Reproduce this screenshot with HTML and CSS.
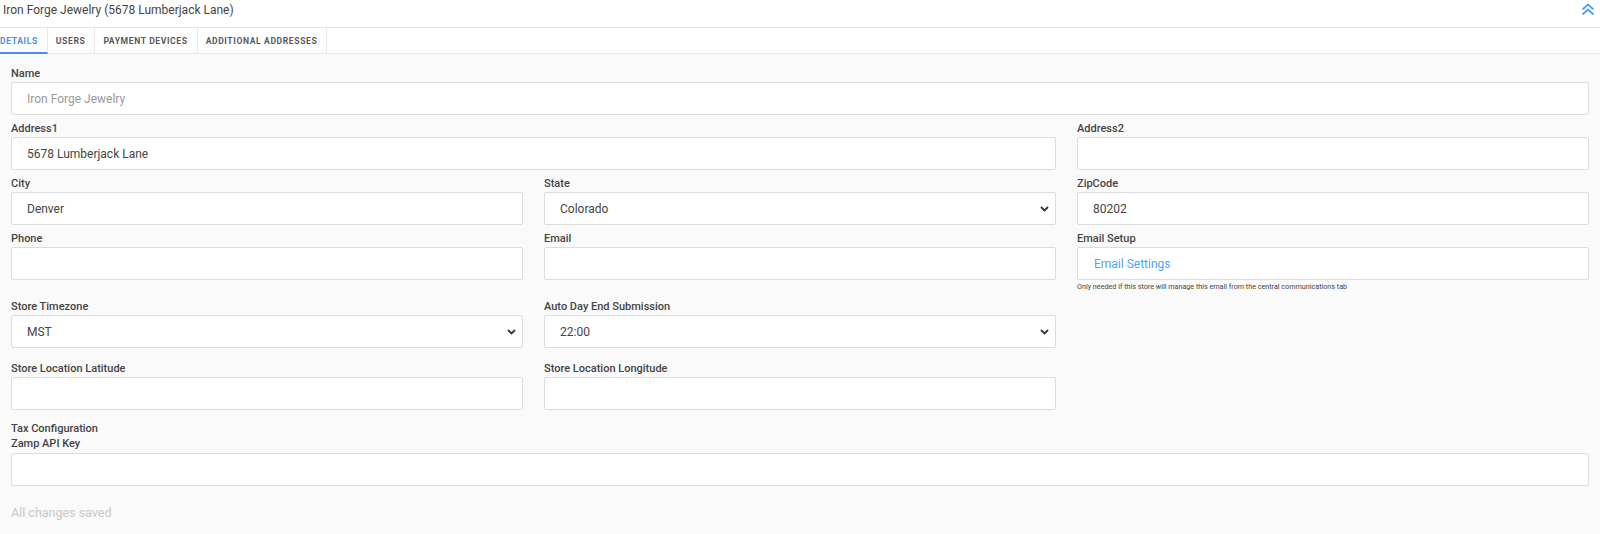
FILE: index.html
```html
<!DOCTYPE html>
<html>
<head>
<meta charset="utf-8">
<link rel="stylesheet" href="styles.css">
</head>
<body>
<div class="header">
  <div class="title">Iron Forge Jewelry (5678 Lumberjack Lane)</div>
  <svg class="collapse" width="14" height="13" viewBox="0 0 14 13"><path d="M1.5 6.5 L7 1.5 L12.5 6.5 M1.5 11.5 L7 6.5 L12.5 11.5" fill="none" stroke="#4ea1f3" stroke-width="1.8"/></svg>
</div>
<div class="tabs">
  <div class="tab active first">DETAILS</div>
  <div class="tab">USERS</div>
  <div class="tab">PAYMENT DEVICES</div>
  <div class="tab">ADDITIONAL ADDRESSES</div>
</div>
<div class="form">
  <div class="row grid1">
    <div class="field"><div class="label">Name</div><div class="input muted">Iron Forge Jewelry</div></div>
  </div>
  <div class="row grid3">
    <div class="field span2"><div class="label">Address1</div><div class="input">5678 Lumberjack Lane</div></div>
    <div class="field"><div class="label">Address2</div><div class="input"></div></div>
  </div>
  <div class="row grid3">
    <div class="field"><div class="label">City</div><div class="input">Denver</div></div>
    <div class="field"><div class="label">State</div><div class="input select"><span>Colorado</span><svg width="9" height="6" viewBox="0 0 9 6"><path d="M1 1 L4.5 4.5 L8 1" fill="none" stroke="#333" stroke-width="1.8"/></svg></div></div>
    <div class="field"><div class="label">ZipCode</div><div class="input">80202</div></div>
  </div>
  <div class="row grid3">
    <div class="field"><div class="label">Phone</div><div class="input"></div></div>
    <div class="field"><div class="label">Email</div><div class="input"></div></div>
    <div class="field"><div class="label">Email Setup</div><div class="input link">Email Settings</div><div class="hint">Only needed if this store will manage this email from the central communications tab</div></div>
  </div>
  <div class="row grid3 tz">
    <div class="field"><div class="label">Store Timezone</div><div class="input select"><span>MST</span><svg width="9" height="6" viewBox="0 0 9 6"><path d="M1 1 L4.5 4.5 L8 1" fill="none" stroke="#333" stroke-width="1.8"/></svg></div></div>
    <div class="field"><div class="label">Auto Day End Submission</div><div class="input select"><span>22:00</span><svg width="9" height="6" viewBox="0 0 9 6"><path d="M1 1 L4.5 4.5 L8 1" fill="none" stroke="#333" stroke-width="1.8"/></svg></div></div>
  </div>
  <div class="row grid3 geo">
    <div class="field"><div class="label">Store Location Latitude</div><div class="input"></div></div>
    <div class="field"><div class="label">Store Location Longitude</div><div class="input"></div></div>
  </div>
  <div class="row grid1 tax">
    <div class="field"><div class="label section">Tax Configuration</div><div class="label zamp">Zamp API Key</div><div class="input"></div></div>
  </div>
  <div class="saved">All changes saved</div>
</div>
</body>
</html>
```
FILE: styles.css
```css
* { box-sizing: border-box; }
html, body { margin: 0; padding: 0; }
body {
  width: 1600px;
  height: 534px;
  background: #fafafa;
  font-family: Roboto, "Liberation Sans", sans-serif;
  color: #333;
  overflow: hidden;
}
.header {
  height: 28px;
  background: #fff;
  border-bottom: 1px solid #e3e3e3;
  display: flex;
  align-items: flex-start;
  justify-content: space-between;
  padding: 2px 5px 0 3px;
}
.title {
  font-size: 12px;
  line-height: 16px;
  color: #444;
}
.collapse { margin-top: 1px; }
.tabs {
  height: 26px;
  background: #fff;
  border-bottom: 1px solid #e8e8e8;
  display: flex;
}
.tab {
  height: 25px;
  padding: 0 9px 0 8px;
  display: flex;
  align-items: center;
  font-size: 8.6px;
  font-weight: 700;
  letter-spacing: 0.6px;
  color: #5a5a5a;
  border-right: 1px solid #e8e8e8;
}
.tab.first { padding-left: 0; }
.tab.active {
  color: #4a90e2;
  border-bottom: 2px solid #4a90e2;
  height: 26px;
  padding-top: 1px;
}
.form {
  padding: 13px 11px 0 11px;
  display: flex;
  flex-direction: column;
  gap: 7px;
}
.row { display: grid; column-gap: 21px; }
.grid1 { grid-template-columns: 1fr; }
.grid3 { grid-template-columns: 1fr 1fr 1fr; }
.span2 { grid-column: span 2; }
.tz { margin-top: 1px; }
.geo { margin-top: 7px; }
.tax { margin-top: 5px; }
.field { display: flex; flex-direction: column; }
.label {
  font-size: 11px;
  font-weight: 500;
  line-height: 14px;
  margin-bottom: 1px;
  color: #444;
}
.label.section { margin-bottom: 1px; }
.label.zamp { margin-bottom: 2px; }
.input {
  height: 33px;
  background: #fff;
  border: 1px solid #dcdcdc;
  border-radius: 2px;
  padding: 0 15px;
  display: flex;
  align-items: center;
  font-size: 12px;
  color: #444;
}
.input.muted { color: #999; }
.input.link { color: #4ea7f2; padding-left: 16px; }
.input.select { justify-content: space-between; padding-right: 6px; }
.hint {
  font-size: 7.2px;
  line-height: 10px;
  margin-top: 2px;
  color: #444;
}
.saved {
  margin-top: 12px;
  font-size: 12.5px;
  line-height: 16px;
  color: #c8c8c8;
}
```
